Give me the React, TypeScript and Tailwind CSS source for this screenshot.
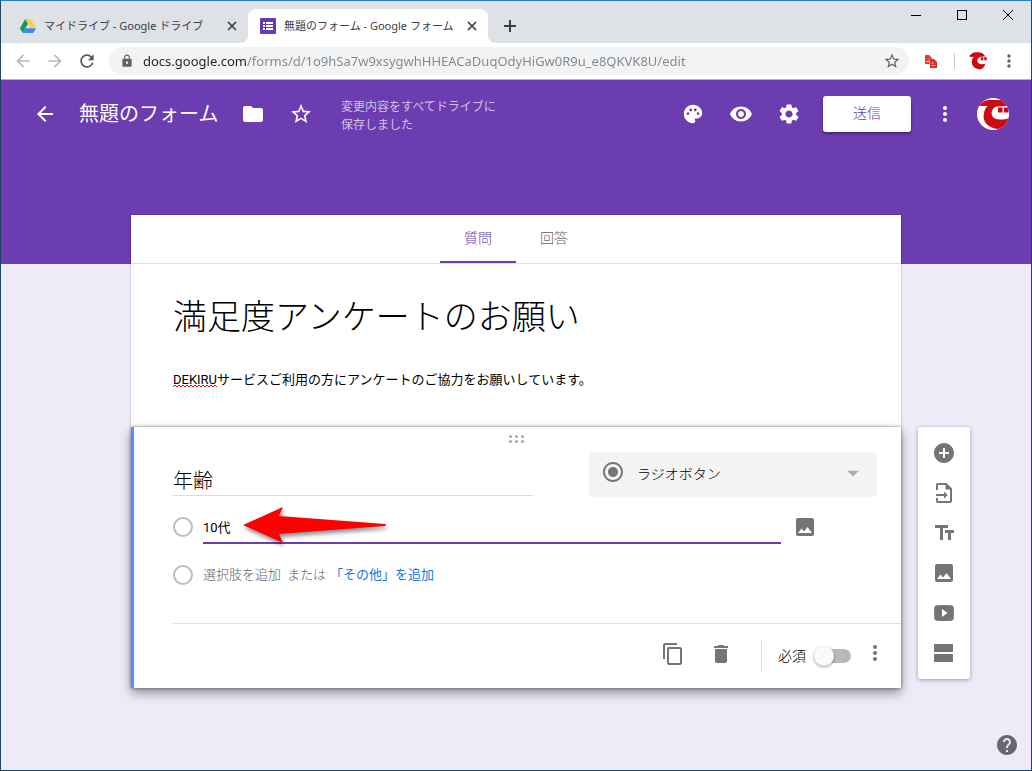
import { useState } from 'react';
import type { ReactNode } from 'react';
import {
  MdAddCircle,
  MdArrowBack,
  MdArrowDropDown,
  MdArrowForward,
  MdContentCopy,
  MdDelete,
  MdFolder,
  MdHelp,
  MdImage,
  MdLock,
  MdMoreVert,
  MdPalette,
  MdRadioButtonChecked,
  MdRefresh,
  MdRemoveRedEye,
  MdSettings,
  MdStarBorder,
} from 'react-icons/md';

const URL_TEXT =
  'docs.google.com/forms/d/1o9hSa7w9xsygwhHHEACaDuqOdyHiGw0R9u_e8QKVK8U/edit';

function DriveIcon() {
  return (
    <svg width="16" height="16" viewBox="0 0 16 16" aria-hidden="true">
      <path d="M5.3 1 0 10.2 2.7 15 8 5.8z" fill="#0f9d58" />
      <path d="M5.3 1h5.4L16 10.2h-5.4z" fill="#ffcd40" />
      <path d="M5.4 10.2H16L13.3 15H2.7z" fill="#4285f4" />
    </svg>
  );
}

function FormsIcon() {
  return (
    <svg width="16" height="16" viewBox="0 0 16 16" aria-hidden="true">
      <rect width="16" height="16" rx="1" fill="#673ab7" />
      <path
        d="M3 4h2v2H3zM6 4h7v2H6zM3 7h2v2H3zM6 7h7v2H6zM3 10h2v2H3zM6 10h7v2H6z"
        fill="#fff"
      />
    </svg>
  );
}

/** Red account mark, on its own or inside the white disc. */
function AccountMark({ size, disc }: { size: number; disc?: boolean }) {
  return (
    <svg
      width={size}
      height={size}
      viewBox="0 0 32 32"
      className={disc ? 'rounded-full bg-white' : ''}
      aria-hidden="true"
    >
      <g fill="#cc0a12">
        {disc ? (
          <path d="M2 8C5 3 9 2 14 2H24C28 3 30 6 31 8L20 8.500C14 10 13 17 17 20C21 22 27 22 32 20C30 26 27 30 21 31C11 30 5 24 7 15C7.500 12 9 9 11 8z" />
        ) : (
          <path d="M0 7C4 6 4 1 10 1C18 0 25 0 29 8L21 8.500C15 10 13 16 17 20C20 22 25 22 29 21C27 28 24 31 19 31C10 30 4 24 5 16C5.500 12 7 10 9 8.500C6 9 2 9 0 7z" />
        )}
        <path d="M21 9.500h4.500v5H21zM27 9.500h4.500v5H27z" />
      </g>
    </svg>
  );
}

function BrowserTab({ icon, title, active }: { icon: ReactNode; title: string; active?: boolean }) {
  return (
    <div
      className={
        active
          ? 'relative flex w-60 items-center rounded-t-lg bg-white pl-3 pr-2 before:absolute before:bottom-0 before:-left-2 before:size-2 before:bg-[radial-gradient(circle_at_0_0,transparent_8px,#fff_8px)] after:absolute after:bottom-0 after:-right-2 after:size-2 after:bg-[radial-gradient(circle_at_100%_0,transparent_8px,#fff_8px)]'
          : 'flex w-60 items-center pl-3 pr-2'
      }
    >
      {icon}
      <span className="ml-2 flex-1 truncate font-['Noto_Sans','Noto_Sans_CJK_JP',sans-serif] text-[11px] leading-4 text-[#3c4043]">
        {title}
      </span>
      <button type="button" aria-label="タブを閉じる" className="flex size-4 items-center justify-center">
        <svg width="10" height="10" viewBox="0 0 10 10" stroke="#3c4043" strokeWidth="1.700">
          <path d="M1 1l8 8M9 1l-8 8" />
        </svg>
      </button>
    </div>
  );
}

function BrowserChrome() {
  return (
    <header className="border-b border-[#b6b4b6] bg-white">
      <div className="flex h-[42px] bg-[#dee1e6]">
        <div className="flex flex-1 pt-2 pl-[7px]">
          <BrowserTab icon={<DriveIcon />} title="マイドライブ - Google ドライブ" />
          <BrowserTab icon={<FormsIcon />} title="無題のフォーム - Google フォーム" active />
          <button type="button" aria-label="新しいタブ" className="ml-2 flex w-7 items-center justify-center">
            <svg width="12" height="12" viewBox="0 0 12 12" stroke="#3c4043" strokeWidth="2">
              <path d="M6 0v12M0 6h12" />
            </svg>
          </button>
        </div>
        <div className="flex h-7">
          <button type="button" aria-label="最小化" className="flex w-[46px] items-center justify-center">
            <span className="h-px w-[10px] bg-black" />
          </button>
          <button type="button" aria-label="最大化" className="flex w-[46px] items-center justify-center">
            <span className="size-[10px] border border-black" />
          </button>
          <button type="button" aria-label="閉じる" className="flex w-[46px] items-center justify-center">
            <svg width="10" height="10" viewBox="0 0 10 10" stroke="#000">
              <path d="M0 0l10 10M10 0L0 10" />
            </svg>
          </button>
        </div>
      </div>

      <div className="flex h-9 items-center pl-[6px] pr-3">
        <button type="button" aria-label="戻る" className="flex w-8 justify-center text-[#b9bbbe]">
          <MdArrowBack size={20} />
        </button>
        <button type="button" aria-label="進む" className="flex w-8 justify-center text-[#b9bbbe]">
          <MdArrowForward size={20} />
        </button>
        <button type="button" aria-label="再読み込み" className="flex w-8 justify-center text-[#54575b]">
          <MdRefresh size={20} />
        </button>
        <div className="ml-[6px] flex h-7 flex-1 items-center rounded-full bg-[#f1f3f4] pl-[11px] pr-2 text-[#5f6368]">
          <MdLock size={14} />
          <input
            aria-label="アドレス"
            defaultValue={URL_TEXT}
            className="ml-[9px] min-w-0 flex-1 bg-[linear-gradient(90deg,#202124_103px,#80868b_103px)] bg-clip-text font-['Noto_Sans',sans-serif] text-[13px] leading-5 text-transparent outline-none"
          />
          <button type="button" aria-label="ブックマーク">
            <MdStarBorder size={18} />
          </button>
        </div>
        <button type="button" aria-label="拡張機能" className="ml-[15px] mr-4">
          <svg width="14" height="14" viewBox="0 0 14 14">
            <path d="M1 1h4l3 3v6H1z" fill="#e8393a" />
            <path d="M6 5h4l3 3v6H6z" fill="#e0282e" />
            <path d="M2 7.500h3M7.500 9h2M7.500 11.500h4" stroke="#fff" strokeWidth=".8" />
            <path d="M5.600 4.500V10" stroke="#fff" strokeWidth=".5" />
          </svg>
        </button>
        <span className="h-4 w-px bg-[#c4c7ca]" />
        <button type="button" aria-label="プロフィール" className="ml-[14px] mr-3">
          <AccountMark size={18} />
        </button>
        <button type="button" aria-label="Chrome の設定" className="text-[#5f6368]">
          <MdMoreVert size={20} />
        </button>
      </div>
    </header>
  );
}

function BarButton({ label, children }: { label: string; children: ReactNode }) {
  return (
    <button type="button" aria-label={label} className="flex size-12 items-center justify-center">
      {children}
    </button>
  );
}

function AppBar() {
  return (
    <div className="h-[184px] bg-[#6c3cb1] text-white">
      <div className="flex h-[68px] items-center pl-5 pr-[22px]">
        <BarButton label="フォームのホーム">
          <MdArrowBack size={24} />
        </BarButton>
        <input
          aria-label="ドキュメント名"
          defaultValue="無題のフォーム"
          className="ml-[10px] w-[150px] bg-transparent text-xl outline-none"
        />
        <BarButton label="フォルダに移動">
          <MdFolder size={24} />
        </BarButton>
        <BarButton label="スターを付ける">
          <MdStarBorder size={24} />
        </BarButton>
        <p className="ml-4 w-[168px] pt-1 text-xs leading-[18px] text-white/70">
          変更内容をすべてドライブに
          <br />
          保存しました
        </p>
        <div className="ml-auto flex items-center">
          <BarButton label="テーマをカスタマイズ">
            <MdPalette size={22} />
          </BarButton>
          <BarButton label="プレビュー">
            <MdRemoveRedEye size={24} />
          </BarButton>
          <BarButton label="設定">
            <MdSettings size={24} />
          </BarButton>
          <button
            type="button"
            className="mx-[10px] h-9 w-[88px] rounded-[3px] bg-white pb-[2px] text-sm font-light text-[#6c3cb1] shadow-[0_2px_3px_rgba(0,0,0,0.35)]"
          >
            送信
          </button>
          <BarButton label="その他">
            <MdMoreVert size={24} />
          </BarButton>
          <button type="button" aria-label="アカウント" className="ml-2">
            <AccountMark size={32} disc />
          </button>
        </div>
      </div>
    </div>
  );
}

function OptionCircle() {
  return <span className="size-5 shrink-0 rounded-full border-2 border-[#bdbdbd]" />;
}

/** Callout arrow pointing at the first option. */
function Callout() {
  return (
    <svg
      width="144"
      height="38"
      viewBox="0 0 144 38"
      className="pointer-events-none absolute left-10 top-[-4px] overflow-visible drop-shadow-[1px_3px_2px_rgba(0,0,0,0.45)]"
      aria-hidden="true"
    >
      <path d="M0 19L40 1L36 10L142 18Q144 19 142 20L36 28L40 37z" fill="#f00" />
    </svg>
  );
}

function QuestionCard() {
  const [required, setRequired] = useState(false);

  return (
    <section className="border-l-[3px] border-[#4d90fe] bg-white pl-[39px] shadow-[0_0_3px_rgba(0,0,0,0.45),0_5px_10px_rgba(0,0,0,0.4)]">
      <div className="-ml-10 flex h-[25px] justify-center pt-2">
        <svg width="16" height="8" viewBox="0 0 16 8" fill="#a6a6a6" aria-hidden="true">
          {[1.5, 7.5, 13.5].map((x) => (
            <g key={x}>
              <circle cx={x} cy="1.500" r="1.500" />
              <circle cx={x} cy="6.500" r="1.500" />
            </g>
          ))}
        </svg>
      </div>

      <div className="flex items-start justify-between pr-6">
        <input
          aria-label="質問のタイトル"
          defaultValue="年齢"
          className="mt-3 h-8 w-[360px] border-b border-[#dadada] text-xl font-light outline-none"
        />
        <div className="relative flex h-[45px] w-[288px] items-center rounded-[3px] bg-[#f4f4f4] text-[#757575]">
          <MdRadioButtonChecked size={24} className="pointer-events-none absolute left-3 top-2" />
          <select
            aria-label="質問の形式"
            className="h-full w-full appearance-none bg-transparent pb-[2px] pl-12 text-sm font-light text-black outline-none"
          >
            <option>ラジオボタン</option>
          </select>
          <MdArrowDropDown size={28} className="pointer-events-none absolute right-[10px] top-[7px] text-[#ababab]" />
        </div>
      </div>

      <div className="flex h-[60px] items-center pr-[84px]">
        <OptionCircle />
        <div className="relative ml-[10px] flex-1">
          <input
            aria-label="選択肢 1"
            defaultValue="10代"
            className="block h-[34px] w-full border-b-2 border-[#6c3cb1] text-[13px] outline-none"
          />
          <Callout />
        </div>
        <button type="button" aria-label="画像を追加" className="ml-3 text-[#757575]">
          <MdImage size={24} />
        </button>
      </div>

      <div className="flex h-9 items-center text-[13px] font-light text-[#616161]">
        <OptionCircle />
        <button type="button" className="ml-[10px]">
          選択肢を追加
        </button>
        <span className="ml-[6px]">または</span>
        <button type="button" className="ml-1 font-normal text-[#1a73e8]">
          「その他」を追加
        </button>
      </div>

      <div className="mt-[30px] flex h-[65px] items-center justify-end border-t border-[#dedede] pr-[14px] text-[#757575]">
        <button type="button" aria-label="コピーを作成" className="flex size-12 justify-center pt-[10px]">
          <MdContentCopy size={24} />
        </button>
        <button type="button" aria-label="削除" className="flex size-12 justify-center pt-[10px]">
          <MdDelete size={24} />
        </button>
        <span className="ml-4 h-8 w-px bg-[#dedede]" />
        <label className="ml-4 flex items-center gap-2 text-sm font-light text-black">
          必須
          <span className="relative flex h-5 w-[37px] items-center">
            <input
              type="checkbox"
              checked={required}
              onChange={(e) => setRequired(e.target.checked)}
              className="peer ml-[5px] h-[14px] w-8 appearance-none rounded-full bg-[#b9b9b9] checked:bg-[#b39ddb]"
            />
            <span className="pointer-events-none absolute left-0 size-5 rounded-full bg-[#fafafa] shadow-[0_1px_3px_rgba(0,0,0,0.4)] peer-checked:left-[17px]" />
          </span>
        </label>
        <button type="button" aria-label="その他のオプション" className="ml-3 h-12 pb-[6px]">
          <MdMoreVert size={24} />
        </button>
      </div>
    </section>
  );
}

const TOOLS: { label: string; icon: ReactNode }[] = [
  { label: '質問を追加', icon: <MdAddCircle size={24} /> },
  {
    label: '質問をインポート',
    icon: (
      <svg width="24" height="24" viewBox="0 0 24 24" fill="none" stroke="currentColor" strokeWidth="2">
        <path d="M5 9V4q0-1 1-1h8l5 5v12q0 1-1 1H6q-1 0-1-1v-3" />
        <path d="M4 14h9" />
        <path d="M12 10.500v7l3.700-3.500z" fill="currentColor" stroke="none" />
        <path d="M13.500 3v5.500H19V8l-5-5z" fill="currentColor" stroke="none" />
      </svg>
    ),
  },
  {
    label: 'タイトルと説明を追加',
    icon: (
      <svg width="24" height="24" viewBox="0 0 24 24" fill="none" stroke="currentColor" strokeWidth="3">
        <path d="M3 5.500h13M9.500 4v15M13 10.500h9M17.500 9v10" />
      </svg>
    ),
  },
  { label: '画像を追加', icon: <MdImage size={24} /> },
  {
    label: '動画を追加',
    icon: (
      <svg width="24" height="24" viewBox="0 0 24 24" fill="currentColor">
        <path
          fillRule="evenodd"
          d="M4.500 4.300Q12 3.700 19.500 4.300Q21.700 4.500 21.800 7Q22.200 12 21.800 17Q21.700 19.500 19.500 19.700Q12 20.300 4.500 19.700Q2.300 19.500 2.200 17Q1.800 12 2.200 7Q2.300 4.500 4.500 4.300zM10 8v8l5.500-4z"
        />
      </svg>
    ),
  },
  {
    label: 'セクションを追加',
    icon: (
      <svg width="24" height="24" viewBox="0 0 24 24" fill="currentColor">
        <rect x="2" y="3" width="19" height="8" rx=".5" />
        <rect x="2" y="13" width="19" height="8" rx=".5" />
      </svg>
    ),
  },
];

function SideTools() {
  return (
    <div className="ml-[17px] flex w-[52px] flex-col items-center rounded-[3px] bg-white py-[6px] text-[#757575] shadow-[0_1px_4px_rgba(0,0,0,0.35)]">
      {TOOLS.map((tool) => (
        <button
          key={tool.label}
          type="button"
          aria-label={tool.label}
          className="flex size-10 items-center justify-center"
        >
          {tool.icon}
        </button>
      ))}
    </div>
  );
}

export default function App() {
  return (
    <div className="flex min-h-screen flex-col border border-t-[#1e7fd0] border-[#1d4768] bg-[#eeeaf8] font-['Roboto','Noto_Sans_CJK_JP',sans-serif] text-black">
      <BrowserChrome />
      <div className="relative flex-1">
        <AppBar />
        <main className="-mt-[49px] grid grid-cols-[1fr_minmax(0,770px)_1fr] items-start pb-[82px]">
          <div className="col-start-2 bg-white shadow-[0_0_2px_rgba(0,0,0,0.3)]">
            <nav className="flex h-[49px] justify-center border-b border-[#dedede] text-sm font-light">
              <button type="button" className="w-[76px] border-b-2 border-[#6c3cb1] text-[#6c3cb1]">
                質問
              </button>
              <button type="button" className="w-[76px] border-b-2 border-transparent text-[#616161]">
                回答
              </button>
            </nav>
            <div className="h-[163px] px-[42px] pt-7">
              <input
                aria-label="フォームのタイトル"
                defaultValue="満足度アンケートのお願い"
                className="block h-[50px] w-full text-[34px] font-light outline-none"
              />
              <div className="relative mt-[26px]">
                <input
                  aria-label="フォームの説明"
                  defaultValue="DEKIRUサービスご利用の方にアンケートのご協力をお願いしています。"
                  className="block h-5 w-full text-[13px] outline-none"
                />
                {/* spell check mark under the first word */}
                <svg width="44" height="4" className="pointer-events-none absolute left-0 top-4" aria-hidden="true">
                  <path
                    d={`M0 3${'l2 -2l2 2'.repeat(11)}`}
                    fill="none"
                    stroke="#f00"
                  />
                </svg>
              </div>
            </div>
          </div>
          <div className="relative col-start-2">
            <QuestionCard />
          </div>
          <SideTools />
        </main>
        <button type="button" aria-label="ヘルプ" className="absolute bottom-[13px] right-3 text-[#6b6770]">
          <MdHelp size={24} />
        </button>
      </div>
    </div>
  );
}
